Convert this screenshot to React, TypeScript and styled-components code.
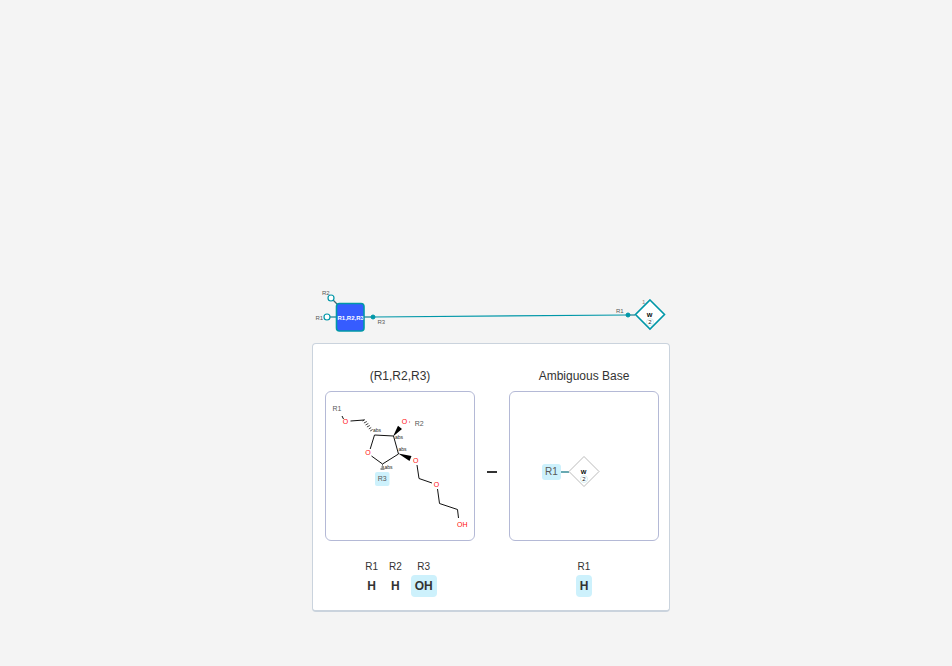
import React from "react";
import styled, { createGlobalStyle } from "styled-components";

const GlobalStyle = createGlobalStyle`
  * { box-sizing: border-box; }
  body {
    margin: 0;
    background: #f4f4f4;
    color: #333333;
    font-family: "Liberation Sans", Arial, sans-serif;
  }
`;

const Canvas = styled.main`
  position: relative;
  min-height: 100vh;
  overflow: hidden;
`;

const Monomers = styled.svg`
  position: absolute;
  inset: 0;
  width: 100%;
  height: 100%;
  font-family: "Liberation Sans", Arial, sans-serif;
`;

const Tooltip = styled.section`
  position: absolute;
  left: 312px;
  top: 343px;
  display: grid;
  grid-template-columns: auto 34px auto;
  padding: 24px 10px 13px 12px;
  background: #ffffff;
  border: 1px solid #cad3dd;
  border-bottom-width: 2px;
  border-radius: 4px;
`;

const Monomer = styled.div`
  display: flex;
  flex-direction: column;
  align-items: center;
`;

const Title = styled.h2`
  margin: 0 0 7px;
  font-size: 12px;
  font-weight: 400;
  line-height: 16px;
`;

const Preview = styled.div`
  width: 150px;
  height: 150px;
  border: 1px solid #b4b9d6;
  border-radius: 6px;
  overflow: hidden;
`;

const Drawing = styled.svg`
  display: block;
  width: 148px;
  height: 148px;
  font-family: "Liberation Sans", Arial, sans-serif;
`;

const BondMark = styled.div`
  margin-top: 103px;
  justify-self: center;
  width: 10px;
  height: 2px;
  background: #333333;
`;

const Points = styled.dl`
  display: flex;
  gap: 7px;
  margin: 20px 0 0;
`;

const Point = styled.div`
  display: flex;
  flex-direction: column;
  align-items: center;
  gap: 2px;
`;

const PointName = styled.dt`
  font-size: 10px;
  line-height: 12px;
`;

const Leaving = styled.dd<{ $active?: boolean }>`
  margin: 0;
  padding: 4px;
  border-radius: 4px;
  background: ${(p) => (p.$active ? "#cdf1fc" : "transparent")};
  font-size: 12px;
  font-weight: 700;
  line-height: 14px;
`;

type PointData = { name: string; group: string; active?: boolean };

const Attachments = ({ points }: { points: PointData[] }) => (
  <Points>
    {points.map((p) => (
      <Point key={p.name}>
        <PointName>{p.name}</PointName>
        <Leaving $active={p.active}>{p.group}</Leaving>
      </Point>
    ))}
  </Points>
);

const Chain = () => (
  <Monomers aria-label="Monomer chain">
    <clipPath id="sugar-label">
      <rect x="337" y="304" width="26.5" height="27" />
    </clipPath>
    <g stroke="#0097a8" fill="none">
      <path d="M373 317L628 315" strokeWidth="1.2" />
      <path d="M330 317H336M364 317H373M628 315H635" stroke="#3f97a4" strokeWidth="1.5" />
      <path d="M333 300L338 305" stroke="#3e6873" strokeWidth="1.2" />
      <circle cx="327" cy="317" r="3" fill="#fff" strokeWidth="1.2" />
      <circle cx="331" cy="298" r="3" fill="#fff" strokeWidth="1.2" />
      <circle cx="373" cy="317" r="2" fill="#0097a8" />
      <circle cx="628" cy="315" r="2" fill="#0097a8" />
      <rect x="336.5" y="303.5" width="27.5" height="27.5" rx="3" fill="#365cff" strokeWidth="1.6" />
      <path d="M650 300L664.5 314.5L650 329L635.5 314.5Z" fill="#fff" strokeWidth="1.6" />
      <circle cx="650" cy="322" r="3.5" stroke="#c5e6ea" strokeWidth="0.7" />
    </g>
    <g fontSize="6" fill="#585858">
      <text x="322" y="295">R2</text>
      <text x="315.5" y="320">R1</text>
      <text x="377.5" y="324">R3</text>
      <text x="616" y="313">R1</text>
      <text x="642" y="304" fill="#888">1</text>
    </g>
    <g fontSize="6" fontWeight="700">
      <text x="337.5" y="320" fill="#fff" clipPath="url(#sugar-label)">R1,R2,R3</text>
      <text x="649.5" y="317" fill="#000" textAnchor="middle">W</text>
      <text x="650" y="324" fill="#222" fontWeight="400" textAnchor="middle">2</text>
    </g>
  </Monomers>
);

const Sugar = () => (
  <Drawing viewBox="326 392 148 148" role="img" aria-label="Structure with R1, R2 and R3">
    <g stroke="#111" strokeWidth="1" fill="none">
      <path d="M342 416L343.5 419M350.5 421L364 420M370.2 449L374.5 435L393.5 436L398.5 454L382.5 464L371.5 456M417 465L419 478.5L432 483M437.5 489L439.5 503.5L457.5 509.5L458.5 518" />
      <path d="M362.5 421L365 419.5M363.9 423L366.8 421.5M365.5 425L368.3 423.5M366.9 427L369.8 425.5M368.8 429L371.2 427.5M370.2 431L372.6 429.5" strokeWidth="0.8" />
      <path d="M382 465H383M381.5 467H384M380.5 469H384.5" strokeWidth="0.9" />
    </g>
    <path d="M393 436.5L402 429L398 425.8ZM398.3 453.5L411.5 456L409.5 461Z" fill="#000" />
    <circle cx="409.5" cy="422" r="0.7" fill="#d77" />
    <rect x="375" y="472" width="14.5" height="14" rx="2" fill="#cdf1fc" />
    <g fontSize="7" fill="#ff0d0d" textAnchor="middle">
      <text x="345.5" y="424">O</text>
      <text x="404.5" y="424">O</text>
      <text x="368" y="455">O</text>
      <text x="415.7" y="463">O</text>
      <text x="436.5" y="487">O</text>
      <text x="462.3" y="527">OH</text>
    </g>
    <g fontSize="5" fill="#222">
      <text x="373" y="432">abs</text>
      <text x="395" y="439">abs</text>
      <text x="398.5" y="451">abs</text>
      <text x="384.5" y="469">abs</text>
    </g>
    <g fontSize="7" fill="#585858" textAnchor="middle">
      <text x="337" y="411">R1</text>
      <text x="419.3" y="426">R2</text>
      <text x="382.3" y="481">R3</text>
    </g>
  </Drawing>
);

const AmbiguousBase = () => (
  <Drawing viewBox="510 392 148 148" role="img" aria-label="Ambiguous base with R1">
    <path d="M561 472H569" stroke="#68a9b2" strokeWidth="2" />
    <rect x="542" y="464" width="19" height="16" rx="3" fill="#cdf1fc" />
    <path d="M584 456.5L599 471.5L584 486.5L569 471.5Z" fill="#fff" stroke="#aaa" strokeWidth="0.8" />
    <circle cx="584" cy="479" r="3.5" fill="none" stroke="#c5e6ea" strokeWidth="0.7" />
    <g textAnchor="middle">
      <text x="551.5" y="475" fontSize="10" fill="#585858">R1</text>
      <text x="583.5" y="474" fontSize="6" fontWeight="700">W</text>
      <text x="584" y="481" fontSize="6" fill="#222">2</text>
    </g>
  </Drawing>
);

export default function App() {
  return (
    <>
      <GlobalStyle />
      <Canvas>
        <Chain />
        <Tooltip>
          <Monomer>
            <Title>(R1,R2,R3)</Title>
            <Preview><Sugar /></Preview>
            <Attachments
              points={[
                { name: "R1", group: "H" },
                { name: "R2", group: "H" },
                { name: "R3", group: "OH", active: true },
              ]}
            />
          </Monomer>
          <BondMark />
          <Monomer>
            <Title>Ambiguous Base</Title>
            <Preview><AmbiguousBase /></Preview>
            <Attachments points={[{ name: "R1", group: "H", active: true }]} />
          </Monomer>
        </Tooltip>
      </Canvas>
    </>
  );
}
